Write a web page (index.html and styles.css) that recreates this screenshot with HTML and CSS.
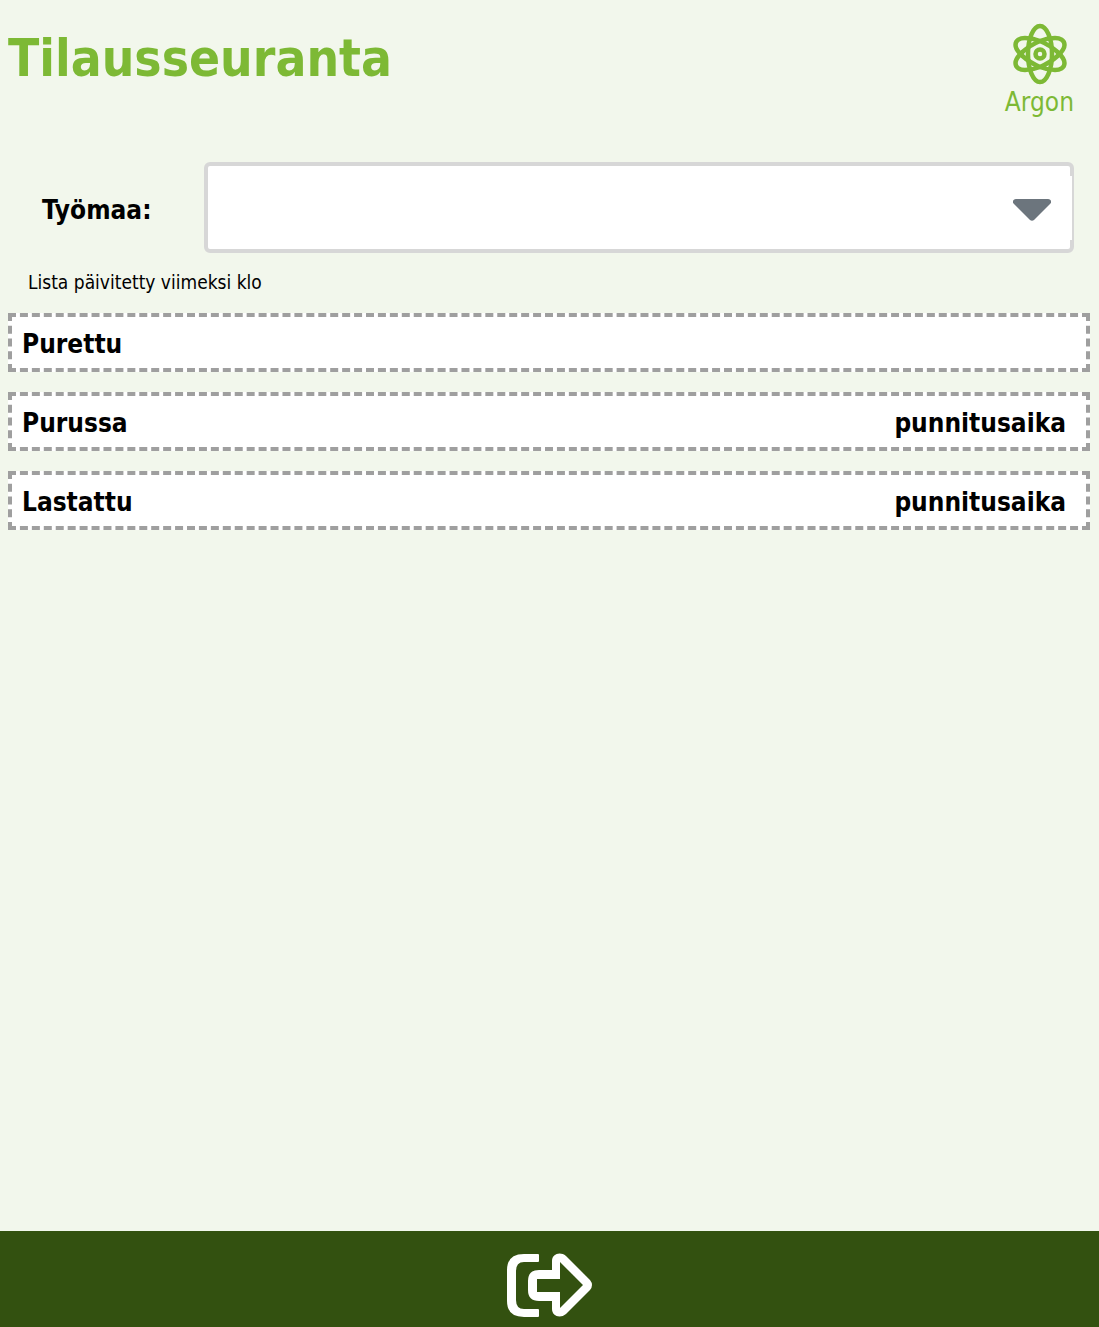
FILE: index.html
```html
<!DOCTYPE html>
<html lang="fi">
<head>
  <meta charset="UTF-8" />
  <meta name="viewport" content="width=device-width, initial-scale=1.0"/>
  <title>Tilausseuranta</title>
  <link rel="stylesheet" href="styles.css">
</head>
<body>

  <header class="header">
    <h1>Tilausseuranta</h1>
    <div class="logo">
      <svg class="logo-icon" viewBox="0 0 54 60" aria-hidden="true">
        <ellipse cx="28" cy="30" rx="12" ry="28" />
        <path d="M3.500 21C3.500 16 8 14 13 14C18 14 23 15 28 17C42 23 52.500 33 52.500 39C52.500 44 48 46 43 46C38 46 33 45 28 43C14 37 3.500 27 3.500 21Z" />
        <path d="M52.500 21C52.500 16 48 14 43 14C38 14 33 15 28 17C14 23 3.500 33 3.500 39C3.500 44 8 46 13 46C18 46 23 45 28 43C42 37 52.500 27 52.500 21Z" />
        <circle cx="28" cy="30" r="4.500" />
      </svg>
      <span>Argon</span>
    </div>
  </header>

  <main>
    <div class="site-row">
      <label for="site">Työmaa:</label>
      <div class="select-box">
        <select id="site">
          <option value=""></option>
        </select>
        <div class="select-arrow">
          <svg viewBox="0 0 38 22" aria-hidden="true">
            <path d="M3 0H35C38 0 39 3 37 5L21 21Q19 22.500 17 21L1 5C-1 3 0 0 3 0Z" />
          </svg>
        </div>
      </div>
    </div>

    <p class="updated">Lista päivitetty viimeksi klo <span id="updated-time"></span></p>

    <section class="list">
      <h2>Purettu</h2>
    </section>
    <section class="list">
      <h2>Purussa</h2>
      <span class="list-time">punnitusaika</span>
    </section>
    <section class="list">
      <h2>Lastattu</h2>
      <span class="list-time">punnitusaika</span>
    </section>
  </main>

  <footer class="footer">
    <button class="exit-btn" type="button" title="Poistu">
      <svg viewBox="0 0 86 64" aria-hidden="true">
        <path d="M31 1H17Q0 1 0 17V48Q0 64 17 64H31Q32 64 32 63V57Q32 56 31 56H17Q9 56 9 47V18Q9 9 17 9H31Q32 9 32 8V2Q32 1 31 1Z" />
        <path fill-rule="evenodd" d="M45 17V8C45 1 53 -2 59 3L83 27Q87 32 83 37L59 61C53 66 45 63 45 56V48H32Q21 48 21 37V28Q21 17 32 17ZM53 9V26H30V39H53V55L76 32Z" />
      </svg>
    </button>
  </footer>

</body>
</html>
```
FILE: styles.css
```css
* {
  box-sizing: border-box;
}

body {
  display: flex;
  flex-direction: column;
  min-height: 100vh;
  margin: 0;
  background-color: #f2f7ec;
  color: #000;
  font-family: Tahoma, "DejaVu Sans Condensed", "DejaVu Sans", sans-serif;
  font-size: 26px;
  line-height: 32px;
}

.header {
  display: flex;
  justify-content: space-between;
  align-items: flex-start;
  padding: 24px 25px 44px 8px;
  color: #7db935;
}

h1 {
  margin: 0;
  font-size: 51px;
  line-height: 70px;
}

.logo {
  display: flex;
  flex-direction: column;
  align-items: center;
  gap: 2px;
}

.logo-icon {
  width: 54px;
  height: 60px;
  overflow: visible;
  fill: none;
  stroke: #7db935;
  stroke-width: 4.5;
}

main {
  flex: 1;
  padding: 0 9px 20px 8px;
}

.site-row {
  display: flex;
  align-items: center;
  padding: 0 16px 0 34px;
}

.site-row label {
  width: 162px;
  padding-top: 4px;
  font-weight: bold;
}

.select-box {
  position: relative;
  flex: 1;
}

select {
  display: block;
  width: 100%;
  height: 91px;
  padding: 0 80px 0 20px;
  border: 4px solid #d7d7d7;
  border-radius: 6px;
  background-color: #fff;
  font: inherit;
  appearance: none;
}

.select-arrow {
  position: absolute;
  top: 14px;
  right: 2px;
  display: flex;
  align-items: center;
  justify-content: center;
  width: 80px;
  height: 64px;
  padding-top: 4px;
  background-color: #fff;
  pointer-events: none;
}

.select-arrow svg {
  width: 38px;
  height: 22px;
  fill: #6c757d;
}

.updated {
  margin: 12px 20px 14px;
  font-size: 19px;
  line-height: 34px;
}

.list {
  display: flex;
  justify-content: space-between;
  align-items: center;
  margin-bottom: 20px;
  padding: 11px 20px 8px 10px;
  border: 4px dashed #9f9f9f;
  background-color: #fff;
  font-weight: bold;
}

h2 {
  margin: 0;
  font-size: 26px;
}

.footer {
  display: flex;
  justify-content: center;
  align-items: center;
  height: 96px;
  padding-top: 12px;
  background-color: #335110;
}

.exit-btn {
  padding: 0;
  border: none;
  background: none;
  cursor: pointer;
}

.exit-btn svg {
  display: block;
  width: 86px;
  height: 64px;
  fill: #fff;
}
```
